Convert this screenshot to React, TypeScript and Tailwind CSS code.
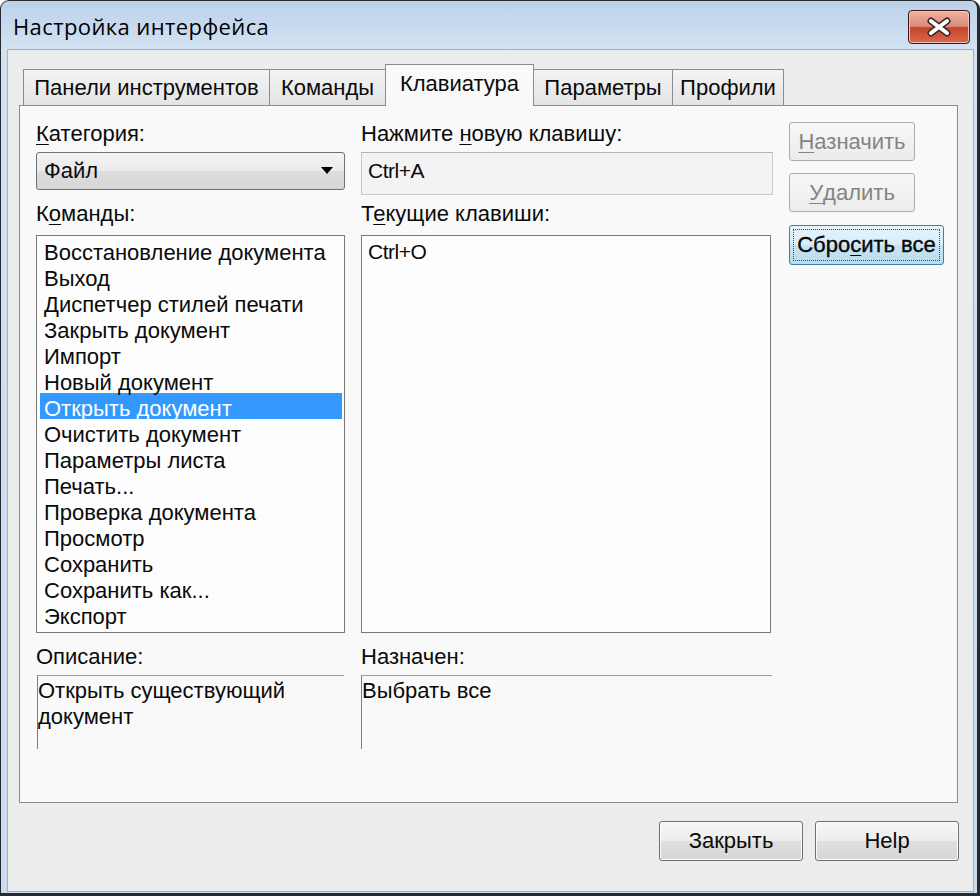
import type { FC, ReactNode } from 'react'

const commands = [
  'Восстановление документа',
  'Выход',
  'Диспетчер стилей печати',
  'Закрыть документ',
  'Импорт',
  'Новый документ',
  'Открыть документ',
  'Очистить документ',
  'Параметры листа',
  'Печать...',
  'Проверка документа',
  'Просмотр',
  'Сохранить',
  'Сохранить как...',
  'Экспорт',
]
const selected = 'Открыть документ'

const tabs = [
  { label: 'Панели инструментов', className: 'w-[247px]' },
  { label: 'Команды', className: '-ml-px w-[117px]' },
  { label: 'Клавиатура', className: '-ml-px w-[149px]', active: true },
  { label: 'Параметры', className: '-ml-px w-[140px]' },
  { label: 'Профили', className: '-ml-px w-[112px]' },
]

const Mn: FC<{ children: ReactNode }> = ({ children }) => (
  <span className="underline decoration-1 underline-offset-[3px]">{children}</span>
)

const Label: FC<{ children: ReactNode; className?: string }> = ({ children, className = '' }) => (
  <div className={`h-[26px] leading-[26px] whitespace-nowrap ${className}`}>{children}</div>
)

const normalBtn =
  'flex items-center justify-center rounded-[3px] border border-[#707070] bg-[linear-gradient(to_bottom,#f6f6f6_0%,#ededed_50%,#dfdfdf_50%,#d6d6d6_100%)] shadow-[inset_0_0_0_1px_#fbfbfb] leading-[26px]'
const disabledBtn =
  'flex items-center justify-center rounded-[3px] border border-[#a9aeb2] bg-[linear-gradient(to_bottom,#f7f7f7,#ececec)] text-[#848484] leading-[26px]'

const CloseIcon = () => (
  <svg width="26" height="20" viewBox="0 0 26 20" aria-hidden>
    <path d="M5 4 L21 16 M21 4 L5 16" stroke="#3a2622" strokeWidth="7" strokeLinecap="round" />
    <path d="M5 4 L21 16 M21 4 L5 16" stroke="#ffffff" strokeWidth="4" strokeLinecap="round" />
  </svg>
)

const App: FC = () => {
  return (
    <div className="h-[896px] w-[980px] bg-white font-['Liberation_Sans',Arial,sans-serif] text-[22px] text-[#0a0a0a]">
      <div className="flex h-full flex-col rounded-t-[9px] border-t border-r-[3px] border-b-[3px] border-l border-[#262a30] bg-[linear-gradient(to_bottom,#bcd1ea,#d3e2f2_48px,#cbdcef)]">
        {/* title bar */}
        <div className="flex h-[48px] shrink-0 items-start justify-between">
          <div className="mt-[10px] pl-[12px] font-['Open_Sans',sans-serif] text-[22px] leading-[30px] tracking-[0.4px] text-black">
            Настройка интерфейса
          </div>
          <button className="mt-[9px] mr-[7px] flex h-[34px] w-[62px] items-center justify-center rounded-[4px] border border-[#3b1812] bg-[linear-gradient(to_bottom,#ecb2a5_0%,#dc8a78_48%,#c5442d_52%,#d9694f_100%)] shadow-[inset_0_0_0_1px_#f2c2b6]">
            <CloseIcon />
          </button>
        </div>

        {/* client area */}
        <div className="mr-[3px] mb-[1px] ml-[6px] flex flex-1 flex-col border border-[#9fb2c8] bg-[#ececec] pt-[14px]">
          <div className="ml-[11px] flex flex-col">
            {/* tabs */}
            <div className="ml-[4px] flex h-[41px] items-end">
              {tabs.map((tab) =>
                tab.active ? (
                  <div
                    key={tab.label}
                    className={`relative z-10 -mb-px flex h-[42px] justify-center border border-b-0 border-[#898c95] bg-[#f9f9f9] pt-[6px] leading-[26px] ${tab.className}`}
                  >
                    {tab.label}
                  </div>
                ) : (
                  <div
                    key={tab.label}
                    className={`flex h-[36px] items-center justify-center border border-b-0 border-[#898c95] bg-[linear-gradient(to_bottom,#f4f4f4,#e3e3e3)] leading-[26px] ${tab.className}`}
                  >
                    {tab.label}
                  </div>
                ),
              )}
            </div>

            {/* panel */}
            <div className="flex h-[698px] w-[939px] gap-[16px] border border-[#898c95] bg-[#f9f9f9] pl-[16px]">
              {/* left column */}
              <div className="flex w-[309px] flex-col pt-[15px]">
                <Label>
                  <Mn>К</Mn>атегория:
                </Label>
                <div className="mt-[5px] flex h-[38px] items-center justify-between rounded-[3px] border border-[#707070] bg-[linear-gradient(to_bottom,#f3f3f3_0%,#ebebeb_50%,#dedede_50%,#d5d5d5_100%)] pr-[11px] pl-[7px] leading-[26px]">
                  <span>Файл</span>
                  <svg width="12" height="8" viewBox="0 0 12 8" aria-hidden>
                    <polygon points="0,0 12,0 6,7" fill="#000" />
                  </svg>
                </div>
                <Label className="mt-[11px]">
                  К<Mn>о</Mn>манды:
                </Label>
                <div className="mt-[8px] h-[398px] border border-[#7a7a7a] bg-[#fdfdfd] pt-px">
                  {commands.map((c) => (
                    <div
                      key={c}
                      className={`mr-[2px] ml-[3px] h-[26px] pt-[3px] pl-[4px] leading-[26px] whitespace-nowrap ${
                        c === selected ? 'bg-[#3399ff] text-white' : ''
                      }`}
                    >
                      {c}
                    </div>
                  ))}
                </div>
                <Label className="mt-[11px]">Описание:</Label>
                <div className="mt-[5px] ml-px h-[74px] w-[307px] border-t border-l border-t-[#9a9a9a] border-l-[#7d7d7d] pt-[2px] leading-[26px]">
                  Открыть существующий
                  <br />
                  документ
                </div>
              </div>

              {/* middle column */}
              <div className="flex w-[412px] flex-col pt-[15px]">
                <Label>
                  Нажмите <Mn>н</Mn>овую клавишу:
                </Label>
                <div className="mt-[5px] h-[43px] border border-[#c9c9c9] border-t-[#b5b5b5] bg-[#f3f3f3] pt-[5px] pl-[6px] text-[21px] leading-[26px] tracking-[-0.5px]">
                  Ctrl+A
                </div>
                <Label className="mt-[6px]">
                  Т<Mn>е</Mn>кущие клавиши:
                </Label>
                <div className="mt-[8px] h-[398px] w-[410px] border border-[#7a7a7a] bg-[#fdfdfd] pt-[3px] pl-[6px] text-[21px] leading-[26px] tracking-[-0.5px]">
                  Ctrl+O
                </div>
                <Label className="mt-[11px]">Назначен:</Label>
                <div className="mt-[5px] h-[74px] w-[411px] border-t border-l border-t-[#9a9a9a] border-l-[#7d7d7d] pt-[2px] leading-[26px]">
                  Выбрать все
                </div>
              </div>

              {/* buttons column */}
              <div className="flex flex-col pt-[16px]">
                <div className={`h-[39px] w-[126px] ${disabledBtn}`}>
                  <Mn>Н</Mn>азначить
                </div>
                <div className={`mt-[12px] h-[39px] w-[126px] ${disabledBtn}`}>
                  <Mn>У</Mn>далить
                </div>
                <div className="mt-[13px] h-[40px] w-[155px] rounded-[3px] border border-[#3b7fae] bg-[linear-gradient(to_bottom,#e6f4fb_0%,#d8edf8_50%,#c6e4f4_50%,#bbdcee_100%)] p-[3px]">
                  <div className="flex h-full items-center justify-center border border-dotted border-[#3a4a55] leading-[26px] [-webkit-text-stroke:0.35px_#000]">
                    Сбро<Mn>с</Mn>ить все
                  </div>
                </div>
              </div>
            </div>

            {/* footer */}
            <div className="mt-[18px] flex justify-end gap-[12px] pr-[14px]">
              <div className={`h-[40px] w-[144px] ${normalBtn}`}>Закрыть</div>
              <div className={`h-[40px] w-[144px] ${normalBtn}`}>Help</div>
            </div>
          </div>
        </div>
      </div>
    </div>
  )
}

export default App
